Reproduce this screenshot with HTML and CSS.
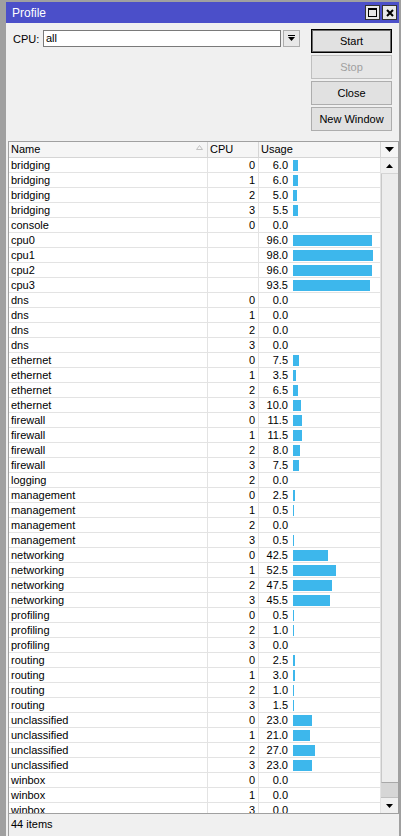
FILE: index.html
```html
<!DOCTYPE html>
<html lang="en">
  <head>
    <meta charset="UTF-8" />
    <title>Profile</title>
    <link rel="stylesheet" href="styles.css">
  </head>
  <body>
    <div class="window">
      <div class="titlebar">
        <span class="title">Profile</span>
        <div class="title-btns">
          <span class="tbtn">
            <svg width="9" height="9" viewBox="0 0 9 9"><rect x="0.5" y="0.5" width="8" height="8" fill="none" stroke="#000"/><rect x="0" y="0" width="9" height="2" fill="#000"/></svg>
          </span>
          <span class="tbtn">
            <svg width="8" height="8" viewBox="0 0 8 8"><path d="M1 1 L7 7 M7 1 L1 7" stroke="#000" stroke-width="2"/></svg>
          </span>
        </div>
      </div>

      <div class="top">
        <div class="filter">
          <label for="cpu">CPU:</label>
          <div class="input" id="cpu">all</div>
          <button class="drop">
            <svg width="7" height="7" viewBox="0 0 7 7"><rect x="0" y="0" width="7" height="1" fill="#000"/><polygon points="0,2 7,2 3.5,6" fill="#000"/></svg>
          </button>
        </div>
        <div class="actions">
          <button class="btn default">Start</button>
          <button class="btn" disabled>Stop</button>
          <button class="btn">Close</button>
          <button class="btn">New Window</button>
        </div>
      </div>

      <!-- Profile list -->
      <div class="table">
        <div class="thead">
          <div class="cell c-name">
            <span>Name</span>
            <svg class="sort" width="7" height="5" viewBox="0 0 7 5"><polygon points="3.5,0.5 6.5,4.5 0.5,4.5" fill="none" stroke="#c0c0c0"/></svg>
          </div>
          <div class="cell c-cpu">CPU</div>
          <div class="cell c-usage">Usage</div>
          <div class="cell c-menu">
            <svg width="9" height="5" viewBox="0 0 9 5"><polygon points="0,0 9,0 4.5,5" fill="#000"/></svg>
          </div>
        </div>
        <div class="tbody">
          <div class="rows" id="rows"></div>
          <div class="scrollbar">
            <div class="sb-btn">
              <svg width="7" height="4" viewBox="0 0 7 4"><polygon points="3.5,0 7,4 0,4" fill="#000"/></svg>
            </div>
            <div class="sb-thumb"></div>
            <div class="sb-track"></div>
            <div class="sb-btn down">
              <svg width="7" height="4" viewBox="0 0 7 4"><polygon points="0,0 7,0 3.5,4" fill="#000"/></svg>
            </div>
          </div>
        </div>
      </div>

      <div class="status">44 items</div>
    </div>

    <script>
      const entries = [
        ["bridging", "0", 6.0], ["bridging", "1", 6.0], ["bridging", "2", 5.0], ["bridging", "3", 5.5],
        ["console", "0", 0.0],
        ["cpu0", "", 96.0], ["cpu1", "", 98.0], ["cpu2", "", 96.0], ["cpu3", "", 93.5],
        ["dns", "0", 0.0], ["dns", "1", 0.0], ["dns", "2", 0.0], ["dns", "3", 0.0],
        ["ethernet", "0", 7.5], ["ethernet", "1", 3.5], ["ethernet", "2", 6.5], ["ethernet", "3", 10.0],
        ["firewall", "0", 11.5], ["firewall", "1", 11.5], ["firewall", "2", 8.0], ["firewall", "3", 7.5],
        ["logging", "2", 0.0],
        ["management", "0", 2.5], ["management", "1", 0.5], ["management", "2", 0.0], ["management", "3", 0.5],
        ["networking", "0", 42.5], ["networking", "1", 52.5], ["networking", "2", 47.5], ["networking", "3", 45.5],
        ["profiling", "0", 0.5], ["profiling", "2", 1.0], ["profiling", "3", 0.0],
        ["routing", "0", 2.5], ["routing", "1", 3.0], ["routing", "2", 1.0], ["routing", "3", 1.5],
        ["unclassified", "0", 23.0], ["unclassified", "1", 21.0], ["unclassified", "2", 27.0], ["unclassified", "3", 23.0],
        ["winbox", "0", 0.0], ["winbox", "1", 0.0], ["winbox", "3", 0.0],
      ];

      // Render rows
      document.getElementById("rows").innerHTML = entries
        .map(([name, cpu, usage]) => {
          const w = usage > 0 ? Math.max(1, Math.round(usage * 0.82)) : 0;
          const bar = w ? `<span class="bar" style="width: ${w}px"></span>` : "";
          return `
            <div class="row">
              <div class="cell c-name">${name}</div>
              <div class="cell c-cpu">${cpu}</div>
              <div class="cell c-usage"><span class="val">${usage.toFixed(1)}</span>${bar}</div>
            </div>`;
        })
        .join("");
    </script>
  </body>
</html>
```

FILE: styles.css
```css
* {
  margin: 0;
  padding: 0;
  box-sizing: border-box;
}

body {
  width: 401px;
  height: 836px;
  overflow: hidden;
  padding: 2px 0 0 6px;
  background: #a0a0a0;
  font-family: "Liberation Sans", Arial, sans-serif;
  font-size: 11px;
  color: #000;
}

.window {
  width: 393px;
  height: 834px;
  background: #f0f0f0;
  display: flex;
  flex-direction: column;
}

.titlebar {
  height: 21px;
  flex: none;
  background: #4b4fc9;
  color: #fff;
  display: flex;
  align-items: center;
  justify-content: space-between;
  padding: 0 2px 0 6px;
  font-size: 12px;
}

.title-btns {
  display: flex;
  gap: 2px;
}

.tbtn {
  width: 15px;
  height: 15px;
  background: #e8e8e8;
  border: 1px solid #333;
  display: flex;
  align-items: center;
  justify-content: center;
}

.top {
  flex: none;
  display: flex;
  padding: 6px 7px 10px 7px;
}

.filter {
  display: flex;
  align-items: center;
  height: 17px;
  margin-top: 1px;
}

.filter label {
  width: 30px;
}

.input {
  width: 238px;
  height: 17px;
  background: #fff;
  border: 1px solid #7a7a7a;
  padding: 0 2px;
  line-height: 15px;
  color: #000;
}

.drop {
  width: 17px;
  height: 17px;
  margin-left: 2px;
  background: #e8e8e8;
  border: 1px solid #adadad;
  display: flex;
  align-items: center;
  justify-content: center;
}

.actions {
  margin-left: auto;
  width: 81px;
  display: flex;
  flex-direction: column;
  gap: 2px;
}

.btn {
  height: 24px;
  background: #e1e1e1;
  border: 1px solid #adadad;
  font-family: inherit;
  font-size: 11px;
  color: #000;
}

.btn.default {
  border-color: #000;
  box-shadow: inset 0 0 0 1px #6a6a6a;
}

.btn:disabled {
  color: #a0a0a0;
  border-color: #bfbfbf;
  background: #e6e6e6;
}

/* Table */
.table {
  flex: none;
  margin-left: 2px;
  width: 391px;
  height: 673px;
  border: 1px solid #a0a0a0;
  background: #fff;
  display: flex;
  flex-direction: column;
}

.thead {
  flex: none;
  display: flex;
  height: 16px;
  background: #f5f5f5;
  border-bottom: 1px solid #d5d5d5;
}

.cell {
  height: 100%;
  line-height: 14px;
  padding-left: 2px;
  border-right: 1px solid #e3e3e3;
  white-space: nowrap;
  overflow: hidden;
}

.thead .cell {
  line-height: 15px;
  border-right-color: #d5d5d5;
}

.c-name {
  width: 199px;
  display: flex;
  justify-content: space-between;
  align-items: center;
  padding-right: 4px;
}

.sort {
  margin-top: -5px;
}

.c-cpu {
  width: 51px;
}

.c-usage {
  width: 122px;
  display: flex;
  align-items: flex-start;
}

.c-menu {
  flex: 1;
  border-right: none;
  display: flex;
  align-items: center;
  justify-content: center;
  padding-left: 0;
}

.tbody {
  flex: 1;
  display: flex;
  overflow: hidden;
}

.rows {
  width: 372px;
  flex: none;
}

.row {
  display: flex;
  height: 15px;
  border-bottom: 1px solid #e3e3e3;
}

.row .c-cpu {
  text-align: right;
  padding-right: 3px;
}

.val {
  width: 27px;
  text-align: right;
  flex: none;
}

.bar {
  height: 11px;
  margin: 2px 0 0 5px;
  background: #3db7ec;
  flex: none;
}

.scrollbar {
  flex: 1;
  display: flex;
  flex-direction: column;
  background: #f0f0f0;
}

.sb-btn {
  height: 16px;
  flex: none;
  display: flex;
  align-items: center;
  justify-content: center;
  border-bottom: 1px solid #d5d5d5;
}

.sb-btn.down {
  border-bottom: none;
  border-top: 1px solid #c0c0c0;
}

.sb-thumb {
  height: 609px;
  flex: none;
  background: #ececec;
  border-left: 1px solid #c8c8c8;
  border-bottom: 1px solid #a8a8a8;
}

.sb-track {
  flex: 1;
  background: #d6d6d6;
}

.status {
  flex: 1;
  margin-left: 2px;
  border-left: 1px solid #a0a0a0;
  padding: 0 2px;
  line-height: 21px;
}
```
